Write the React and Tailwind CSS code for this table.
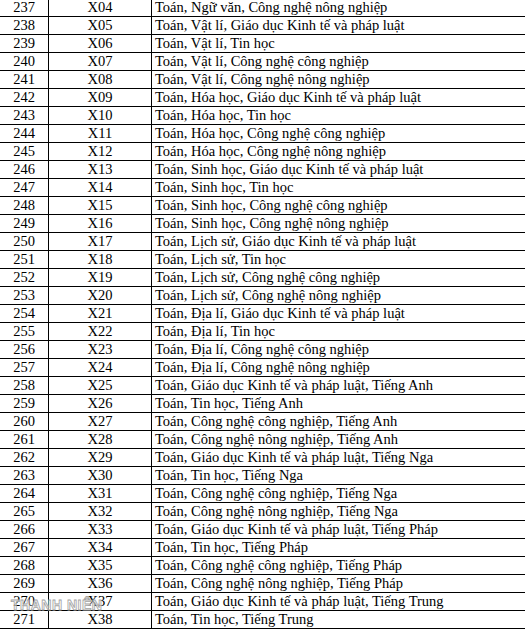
import React from "react";

const rows = [
  ["237", "X04", "Toán, Ngữ văn, Công nghệ nông nghiệp"],
  ["238", "X05", "Toán, Vật lí, Giáo dục Kinh tế và pháp luật"],
  ["239", "X06", "Toán, Vật lí, Tin học"],
  ["240", "X07", "Toán, Vật lí, Công nghệ công nghiệp"],
  ["241", "X08", "Toán, Vật lí, Công nghệ nông nghiệp"],
  ["242", "X09", "Toán, Hóa học, Giáo dục Kinh tế và pháp luật"],
  ["243", "X10", "Toán, Hóa học, Tin học"],
  ["244", "X11", "Toán, Hóa học, Công nghệ công nghiệp"],
  ["245", "X12", "Toán, Hóa học, Công nghệ nông nghiệp"],
  ["246", "X13", "Toán, Sinh học, Giáo dục Kinh tế và pháp luật"],
  ["247", "X14", "Toán, Sinh học, Tin học"],
  ["248", "X15", "Toán, Sinh học, Công nghệ công nghiệp"],
  ["249", "X16", "Toán, Sinh học, Công nghệ nông nghiệp"],
  ["250", "X17", "Toán, Lịch sử, Giáo dục Kinh tế và pháp luật"],
  ["251", "X18", "Toán, Lịch sử, Tin học"],
  ["252", "X19", "Toán, Lịch sử, Công nghệ công nghiệp"],
  ["253", "X20", "Toán, Lịch sử, Công nghệ nông nghiệp"],
  ["254", "X21", "Toán, Địa lí, Giáo dục Kinh tế và pháp luật"],
  ["255", "X22", "Toán, Địa lí, Tin học"],
  ["256", "X23", "Toán, Địa lí, Công nghệ công nghiệp"],
  ["257", "X24", "Toán, Địa lí, Công nghệ nông nghiệp"],
  ["258", "X25", "Toán, Giáo dục Kinh tế và pháp luật, Tiếng Anh"],
  ["259", "X26", "Toán, Tin học, Tiếng Anh"],
  ["260", "X27", "Toán, Công nghệ công nghiệp, Tiếng Anh"],
  ["261", "X28", "Toán, Công nghệ nông nghiệp, Tiếng Anh"],
  ["262", "X29", "Toán, Giáo dục Kinh tế và pháp luật, Tiếng Nga"],
  ["263", "X30", "Toán, Tin học, Tiếng Nga"],
  ["264", "X31", "Toán, Công nghệ công nghiệp, Tiếng Nga"],
  ["265", "X32", "Toán, Công nghệ nông nghiệp, Tiếng Nga"],
  ["266", "X33", "Toán, Giáo dục Kinh tế và pháp luật, Tiếng Pháp"],
  ["267", "X34", "Toán, Tin học, Tiếng Pháp"],
  ["268", "X35", "Toán, Công nghệ công nghiệp, Tiếng Pháp"],
  ["269", "X36", "Toán, Công nghệ nông nghiệp, Tiếng Pháp"],
  ["270", "X37", "Toán, Giáo dục Kinh tế và pháp luật, Tiếng Trung"],
  ["271", "X38", "Toán, Tin học, Tiếng Trung"],
];

export default function App() {
  return (
    <div className="relative w-[525px] h-[629px] overflow-hidden bg-white text-black font-['Liberation_Serif',serif] text-[14.5px]">
      <div className="-mt-px">
        {rows.map(([n, code, subj]) => (
          <div key={n} className="flex h-[18px] border-b-[1.5px] border-black leading-[17px]">
            <div className="w-[49px] shrink-0 text-center border-r border-black">{n}</div>
            <div className="w-[103px] shrink-0 text-center border-r border-black">{code}</div>
            <div className="flex-1 pl-[3px] whitespace-nowrap">{subj}</div>
          </div>
        ))}
      </div>
      <div className="absolute left-[11px] top-[595px] text-[14px] font-bold tracking-[0.5px] text-white/60 font-['Liberation_Sans',sans-serif] [-webkit-text-stroke:0.8px_#a3a3a3]">
        THANH NIÊN
      </div>
    </div>
  );
}
